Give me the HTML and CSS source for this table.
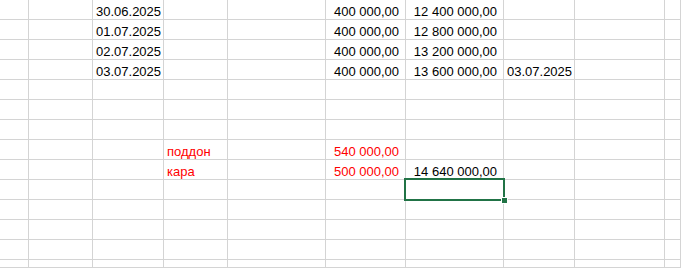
FILE: index.html
```html
<!DOCTYPE html>
<html lang="ru">
<head>
<meta charset="utf-8">
<title>Sheet</title>
<link rel="stylesheet" href="styles.css">
</head>
<body>
<table class="sheet">
  <colgroup>
    <col class="c-a"><col class="c-b"><col class="c-c"><col class="c-d"><col class="c-e">
    <col class="c-f"><col class="c-g"><col class="c-h"><col class="c-i"><col class="c-j">
  </colgroup>
  <tbody>
    <tr><td></td><td></td><td class="txt">30.06.2025</td><td></td><td></td><td class="num">400&nbsp;000,00</td><td class="num">12&nbsp;400&nbsp;000,00</td><td></td><td></td><td></td></tr>
    <tr><td></td><td></td><td class="txt">01.07.2025</td><td></td><td></td><td class="num">400&nbsp;000,00</td><td class="num">12&nbsp;800&nbsp;000,00</td><td></td><td></td><td></td></tr>
    <tr><td></td><td></td><td class="txt">02.07.2025</td><td></td><td></td><td class="num">400&nbsp;000,00</td><td class="num">13&nbsp;200&nbsp;000,00</td><td></td><td></td><td></td></tr>
    <tr><td></td><td></td><td class="txt">03.07.2025</td><td></td><td></td><td class="num">400&nbsp;000,00</td><td class="num">13&nbsp;600&nbsp;000,00</td><td class="txt">03.07.2025</td><td></td><td></td></tr>
    <tr><td></td><td></td><td></td><td></td><td></td><td></td><td></td><td></td><td></td><td></td></tr>
    <tr><td></td><td></td><td></td><td></td><td></td><td></td><td></td><td></td><td></td><td></td></tr>
    <tr><td></td><td></td><td></td><td></td><td></td><td></td><td></td><td></td><td></td><td></td></tr>
    <tr><td></td><td></td><td></td><td class="txt red">поддон</td><td></td><td class="num red">540&nbsp;000,00</td><td></td><td></td><td></td><td></td></tr>
    <tr><td></td><td></td><td></td><td class="txt red">кара</td><td></td><td class="num red">500&nbsp;000,00</td><td class="num">14&nbsp;640&nbsp;000,00</td><td></td><td></td><td></td></tr>
    <tr><td></td><td></td><td></td><td></td><td></td><td></td><td class="active"><div class="selection"></div><div class="handle"></div></td><td></td><td></td><td></td></tr>
    <tr><td></td><td></td><td></td><td></td><td></td><td></td><td></td><td></td><td></td><td></td></tr>
    <tr><td></td><td></td><td></td><td></td><td></td><td></td><td></td><td></td><td></td><td></td></tr>
    <tr><td></td><td></td><td></td><td></td><td></td><td></td><td></td><td></td><td></td><td></td></tr>
    <tr class="partial"><td></td><td></td><td></td><td></td><td></td><td></td><td></td><td></td><td></td><td></td></tr>
  </tbody>
</table>
</body>
</html>
```

FILE: styles.css
```css
html, body {
  margin: 0;
  padding: 0;
  background: #ffffff;
  overflow: hidden;
}

.sheet {
  margin: -1px 0 0 -1px;
  border-collapse: separate;
  border-spacing: 1px;
  background: #d4d4d4;
  table-layout: fixed;
  width: 682px;
  font-family: "Liberation Sans", Arial, sans-serif;
  font-size: 13px;
  color: #000000;
}

.c-a { width: 28px; }
.c-b { width: 63px; }
.c-c { width: 70px; }
.c-d { width: 63px; }
.c-e { width: 97px; }
.c-f { width: 79px; }
.c-g { width: 97px; }
.c-h { width: 70px; }
.c-i { width: 89px; }
.c-j { width: 15px; }

.sheet td {
  background: #ffffff;
  height: 19px;
  padding: 0;
  line-height: 15px;
  vertical-align: bottom;
  white-space: nowrap;
  overflow: visible;
}

.sheet tr.partial td {
  height: 7px;
}

.sheet td.txt {
  text-align: left;
  padding-left: 3px;
}

.sheet td.num {
  text-align: right;
  padding-right: 6px;
}

.sheet td.red {
  color: #ff0000;
}

.sheet td.active {
  position: relative;
}

.selection {
  position: absolute;
  top: -2px;
  left: -2px;
  right: -2px;
  bottom: -2px;
  border: 2px solid #217346;
}

.handle {
  position: absolute;
  right: -5px;
  bottom: -5px;
  width: 5px;
  height: 5px;
  background: #217346;
  border: 1px solid #ffffff;
}
```
